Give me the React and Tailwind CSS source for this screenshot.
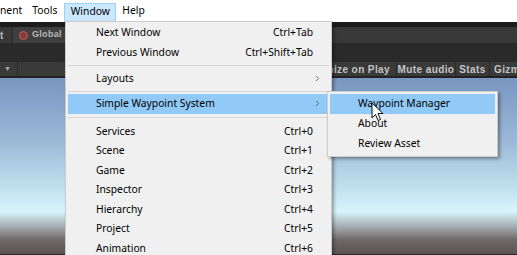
import React from 'react';
import { ChevronRight } from 'lucide-react';

const mainItems = [
    { label: 'Next Window', shortcut: 'Ctrl+Tab' },
    { label: 'Previous Window', shortcut: 'Ctrl+Shift+Tab' },
    { sep: true, h: 'h-[7px]' },
    { label: 'Layouts', sub: true },
    { sep: true, h: 'h-[5.5px]' },
    { label: 'Simple Waypoint System', sub: true, active: true },
    { sep: true, h: 'h-[8px]' },
    { label: 'Services', shortcut: 'Ctrl+0' },
    { label: 'Scene', shortcut: 'Ctrl+1' },
    { label: 'Game', shortcut: 'Ctrl+2' },
    { label: 'Inspector', shortcut: 'Ctrl+3' },
    { label: 'Hierarchy', shortcut: 'Ctrl+4' },
    { label: 'Project', shortcut: 'Ctrl+5' },
    { label: 'Animation', shortcut: 'Ctrl+6' },
];

const subItems = [
    { label: 'Waypoint Manager', active: true },
    { label: 'About' },
    { label: 'Review Asset' },
];

const MenuRow = ({ item }) => {
    if (item.sep) {
        return (
            <div className={`${item.h} flex items-center px-[2px]`}>
                <div className="h-px w-full bg-[#d7d7d7]" />
            </div>
        );
    }
    return (
        <div className={`h-[19.5px] mx-[2px] flex items-center pl-[28px] pr-[16px] ${item.active ? 'bg-[#91c9f7]' : ''}`}>
            <span className="flex-1">{item.label}</span>
            {item.shortcut && <span>{item.shortcut}</span>}
            {item.sub && <ChevronRight className="w-[9px] h-[9px] -mr-[9px] text-[#444]" strokeWidth={2} />}
        </div>
    );
};

const Cursor = () => (
    <svg className="absolute left-[371px] top-[102px]" width="13" height="20" viewBox="0 0 13 20">
        <path d="M1 1 L1 16 L4.5 12.5 L7 18.5 L9.5 17.5 L7 11.5 L12 11.5 Z" fill="#fff" stroke="#111" strokeWidth="1" strokeLinejoin="round" />
    </svg>
);

export default function App() {
    return (
        <div className="relative w-[517px] h-[255px] overflow-hidden bg-[#282828]" style={{ fontFamily: '"Noto Sans", "Open Sans", sans-serif' }}>
            {/* top menu bar */}
            <div className="h-[22px] bg-white flex items-center text-[10.3px] text-black">
                <span className="ml-0">nent</span>
                <span className="ml-[10px]">Tools</span>
                <span className="ml-[7px] h-[19px] mt-[2px] w-[52px] flex items-center justify-center bg-[#cce8ff] border border-[#99d1ff]">Window</span>
                <span className="ml-[6px]">Help</span>
            </div>

            {/* unity toolbars */}
            <div className="h-[5px] bg-[#1c1c1c]" />
            <div className="h-[16px] bg-[#383838] flex items-center text-[9px] font-bold text-[#b8b8b8] whitespace-nowrap" style={{ fontFamily: '"Liberation Sans", sans-serif' }}>
                <span className="ml-0 w-[4px] overflow-hidden text-[10px]">t</span>
                <div className="ml-[8px] h-full w-px bg-[#2a2a2a]" />
                <div className="h-full flex items-center pl-[6px] pr-[4px] bg-[#3f3f3f] border-r border-[#2a2a2a]">
                    <span className="w-[9px] h-[9px] rounded-full bg-[#8a3a3a] border border-[#c06060] mr-[4px]" />
                    <span className="tracking-[0.3px]">Global</span>
                </div>
            </div>
            <div className="h-[19px] bg-[#2a2a2a]" />
            <div className="h-[16px] bg-[#3a3a3a] flex items-center text-[10px] font-semibold text-[#c4c4c4] border-b-2 border-[#222] whitespace-nowrap" style={{ fontFamily: '"Liberation Sans", sans-serif' }}>
                <span className="ml-[4px] text-[7px] text-[#aaa]">▼</span>
                <div className="ml-[6px] h-full w-px bg-[#2a2a2a]" />
                <div className="flex-1 h-full flex items-center justify-end pr-[6px] tracking-[0.4px]">Maximize on Play</div>
                <div className="h-full w-px bg-[#2a2a2a]" />
                <div className="w-[58px] shrink-0 h-full flex items-center justify-center tracking-[0.4px]">Mute audio</div>
                <div className="h-full w-px bg-[#2a2a2a]" />
                <div className="w-[33px] shrink-0 h-full flex items-center justify-center tracking-[0.4px]">Stats</div>
                <div className="h-full w-px bg-[#2a2a2a]" />
                <div className="w-[27px] shrink-0 h-full flex items-center pl-[4px] tracking-[0.4px] overflow-hidden">Gizmos</div>
            </div>

            {/* scene view sky */}
            <div className="h-[176px] bg-[linear-gradient(to_bottom,#7896c0_0%,#9ab8d6_35%,#c0e0ee_62%,#d8f4fb_76%,#a8b0b4_84%,#6e6868_92%,#5a5454_100%)]" />

            {/* window menu */}
            <div className="absolute left-[65px] top-[21px] w-[267px] h-[250px] bg-[#f0f0f0] border border-[#cccccc] pt-px text-[10.3px] text-black shadow-[2px_2px_3px_rgba(0,0,0,0.35)]">
                {mainItems.map((item, i) => (
                    <MenuRow key={i} item={item} />
                ))}
            </div>

            {/* submenu */}
            <div className="absolute left-[327px] top-[91px] w-[171px] bg-[#f0f0f0] border border-[#cccccc] py-[2px] text-[10.3px] text-black shadow-[2px_2px_3px_rgba(0,0,0,0.35)]">
                {subItems.map((item, i) => (
                    <div key={i} className={`h-[20px] mx-[2px] flex items-center pl-[28px] ${item.active ? 'bg-[#91c9f7]' : ''}`}>
                        {item.label}
                    </div>
                ))}
            </div>

            <Cursor />
        </div>
    );
}
